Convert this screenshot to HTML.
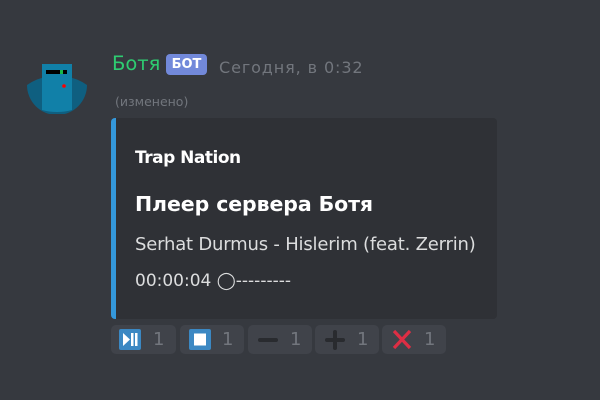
<!DOCTYPE html>
<html><head><meta charset="utf-8"><style>
*{margin:0;padding:0;box-sizing:border-box}
body{width:600px;height:400px;background:#36393f;font-family:"DejaVu Sans","Liberation Sans",sans-serif;position:relative;overflow:hidden}
.a{position:absolute;white-space:nowrap}
.react{position:absolute;top:325px;height:29px;background:#40434a;border-radius:5px}
.react span{position:absolute;top:4px;font-size:18px;color:#72767d;font-family:"DejaVu Sans",sans-serif}
</style></head><body>
<svg class="a" style="left:27px;top:64px" width="60" height="50">
<path d="M0 21 Q10 14 20 13 L40 13 Q50 14 60 21 A30 30 0 0 1 0 21Z" fill="#0f5f80"/>
<path d="M15 0 L45 0 L45 46 Q38 48 30 48 Q22 48 15 46Z" fill="#1180a8"/>
<rect x="19" y="6" width="21" height="4" fill="#000"/>
<rect x="33" y="6" width="3" height="4" fill="#18b84a"/>
<circle cx="37" cy="22" r="1.8" fill="#f00"/>
</svg>
<div class="a" style="left:112px;top:52px;font-size:19.5px;color:#2ecc71;font-weight:500">Ботя</div>
<div class="a" style="left:166px;top:54px;width:41px;height:21px;background:#7289da;border-radius:4px;color:#fff;font-size:13px;font-weight:bold;text-align:center;line-height:21px">БОТ</div>
<div class="a" style="left:219px;top:58px;font-size:16px;color:#72767d;letter-spacing:0.9px">Сегодня, в 0:32</div>
<div class="a" style="left:115px;top:94px;font-size:12.5px;color:#72767d">(изменено)</div>
<div class="a" style="left:111px;top:118px;width:386px;height:201px;background:#2f3136;border-radius:4px;border-left:5px solid #3498db"></div>
<div class="a" style="left:135px;top:148px;font-size:17px;font-weight:bold;color:#fff;letter-spacing:-0.5px">Trap Nation</div>
<div class="a" style="left:135px;top:192px;font-size:20.5px;font-weight:bold;color:#fff;letter-spacing:-0.1px">Плеер сервера Ботя</div>
<div class="a" style="left:135px;top:234px;font-size:18px;color:#dcddde;letter-spacing:-0.2px">Serhat Durmus - Hislerim (feat. Zerrin)</div>
<div class="a" style="left:135px;top:271px;font-size:17px;color:#dcddde;letter-spacing:0px">00:00:04 ◯---------</div>
<div class="react" style="left:111px;width:65px"><svg class="a" style="left:8px;top:4px" width="22" height="21"><rect width="22" height="21" rx="2" fill="#3b88c3"/><path d="M4 4 L11 10.5 L4 17Z" fill="#fff"/><rect x="12" y="4" width="2.5" height="13" fill="#fff"/><rect x="16" y="4" width="2.5" height="13" fill="#fff"/></svg><span style="left:42px">1</span></div>
<div class="react" style="left:180px;width:64px"><svg class="a" style="left:9px;top:4px" width="22" height="21"><rect width="22" height="21" rx="2" fill="#3b88c3"/><rect x="5" y="4.5" width="12" height="12" fill="#fff"/></svg><span style="left:42px">1</span></div>
<div class="react" style="left:248px;width:64px"><svg class="a" style="left:9px;top:4px" width="22" height="21"><rect x="1" y="9" width="20" height="4" rx="2" fill="#292b2f"/></svg><span style="left:42px">1</span></div>
<div class="react" style="left:315px;width:64px"><svg class="a" style="left:9px;top:4px" width="22" height="21"><rect x="1" y="9" width="20" height="4" rx="2" fill="#292b2f"/><rect x="9" y="1" width="4" height="20" rx="2" fill="#292b2f"/></svg><span style="left:42px">1</span></div>
<div class="react" style="left:382px;width:64px"><svg class="a" style="left:9px;top:4px" width="22" height="21"><path d="M3 2 L19 19 M19 2 L3 19" stroke="#dd2e44" stroke-width="3.2"/></svg><span style="left:42px">1</span></div>
</body></html>
